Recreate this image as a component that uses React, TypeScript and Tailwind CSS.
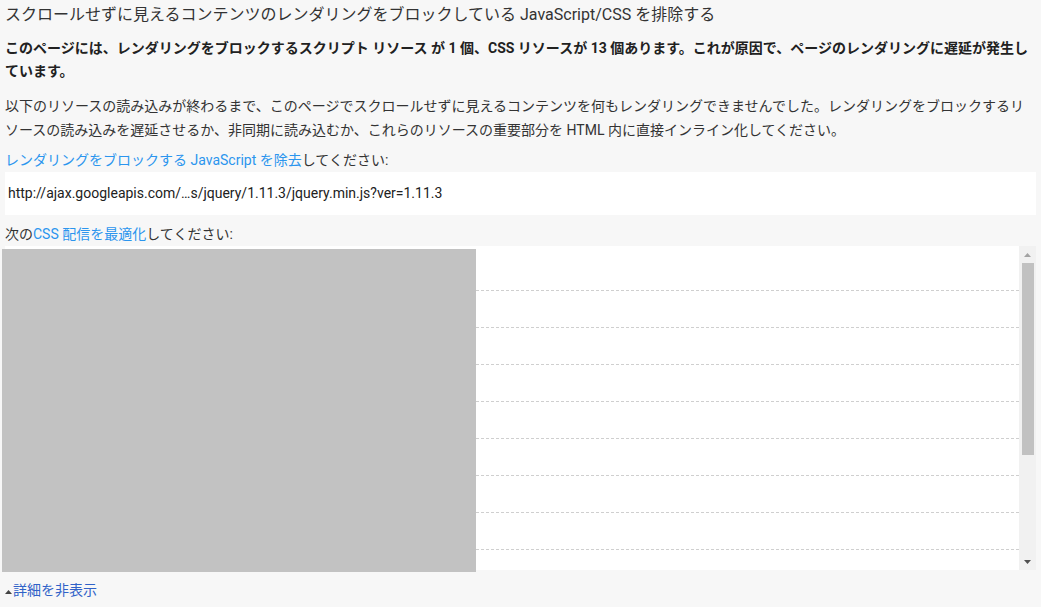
import React from 'react';

const font = { fontFamily: 'Roboto, "Noto Sans CJK JP", sans-serif' };

const rows = Array.from({ length: 9 });

const App: React.FC = () => {
  return (
    <div className="min-h-[607px] w-[1041px] overflow-hidden bg-[#f7f7f7] px-[5px] text-[#212121]" style={font}>
      <h1 className="pt-[4px] text-[16px] font-normal leading-[22px] text-[#333]">
        スクロールせずに見えるコンテンツのレンダリングをブロックしている JavaScript/CSS を排除する
      </h1>

      <p className="mt-[11px] text-[14px] font-bold leading-[23px] text-[#212121]">
        このページには、レンダリングをブロックするスクリプト リソース が 1 個、CSS リソースが 13 個あります。これが原因で、ページのレンダリングに遅延が発生しています。
      </p>

      <p className="mt-[11px] text-[14px] leading-[24px] text-[#333]">
        以下のリソースの読み込みが終わるまで、このページでスクロールせずに見えるコンテンツを何もレンダリングできませんでした。レンダリングをブロックするリソースの読み込みを遅延させるか、非同期に読み込むか、これらのリソースの重要部分を HTML 内に直接インライン化してください。
      </p>

      <div className="mt-[7px] text-[14px] leading-[22px] text-[#333]">
        <a className="text-[#2b95ee]">レンダリングをブロックする JavaScript を除去</a>してください:
      </div>

      <div className="mt-px flex h-[43px] items-center bg-white px-[3px] text-[14px] text-[#212121]">
        http://ajax.googleapis.com/…s/jquery/1.11.3/jquery.min.js?ver=1.11.3
      </div>

      <div className="mt-[8px] text-[14px] leading-[22px] text-[#333]">
        次の<a className="text-[#2b95ee]">CSS 配信を最適化</a>してください:
      </div>

      <div className="relative mt-px flex h-[324px] bg-white">
        <div className="flex flex-1 overflow-hidden">
          <div className="w-[471px] shrink-0" />
          <div className="flex-1">
            <div className="h-[45px] border-b border-dashed border-[#cfcfcf]" />
            {rows.map((_, i) => (
              <div key={i} className="h-[37px] border-b border-dashed border-[#cfcfcf]" />
            ))}
          </div>
        </div>
        <div className="flex w-[17px] shrink-0 flex-col items-center bg-[#f1f1f1]">
          <div className="flex h-[17px] w-full items-center justify-center">
            <svg width="7" height="4" viewBox="0 0 7 4">
              <path d="M3.5 0 L7 4 L0 4 Z" fill="#a3a3a3" />
            </svg>
          </div>
          <div className="h-[192px] w-[12px] bg-[#c1c1c1]" />
          <div className="flex-1" />
          <div className="flex h-[17px] w-full items-center justify-center">
            <svg width="7" height="4" viewBox="0 0 7 4">
              <path d="M0 0 L7 0 L3.5 4 Z" fill="#505050" />
            </svg>
          </div>
        </div>
        <div className="absolute left-[-3px] top-[3px] h-[323px] w-[474px] bg-[#c2c2c2]" />
      </div>

      <div className="mt-[10px] flex items-center text-[14px] leading-[20px]">
        <svg width="7" height="4" viewBox="0 0 7 4" className="mr-px mt-[3px]">
          <path d="M3.5 0 L7 4 L0 4 Z" fill="#444" />
        </svg>
        <a className="text-[#3062c8]">詳細を非表示</a>
      </div>
    </div>
  );
};

export default App;
